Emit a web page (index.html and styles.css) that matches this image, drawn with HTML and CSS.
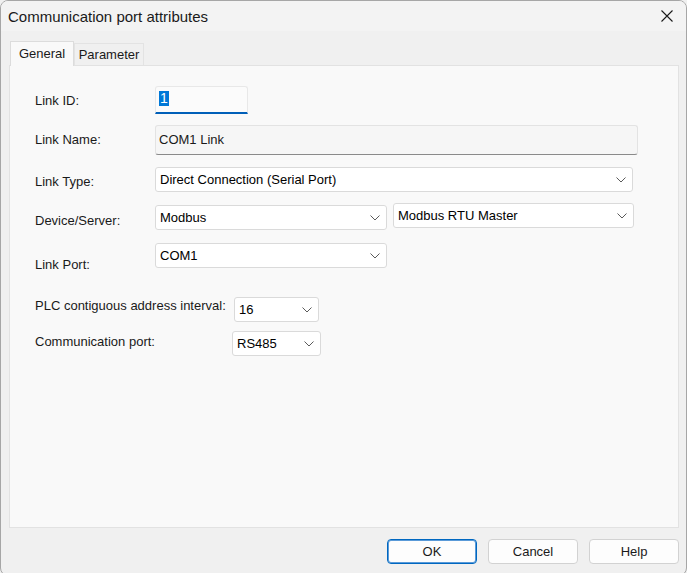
FILE: index.html
```html
<!DOCTYPE html>
<html>
<head>
<meta charset="utf-8">
<link rel="stylesheet" href="styles.css">
</head>
<body>
<div class="window">
  <div class="titlebar">
    <span class="title">Communication port attributes</span>
    <svg class="close" width="12" height="12" viewBox="0 0 12 12"><path d="M0.5 0.5 L11.5 11.5 M11.5 0.5 L0.5 11.5" stroke="#1a1a1a" stroke-width="1.1" fill="none"/></svg>
  </div>
  <div class="content">
    <div class="tabs">
      <div class="tab active">General</div>
      <div class="tab">Parameter</div>
    </div>
    <div class="panel">
      <div class="row r1">
        <label class="lbl">Link ID:</label>
        <div class="input idbox"><span class="sel">1</span></div>
      </div>
      <div class="row r2">
        <label class="lbl">Link Name:</label>
        <div class="input namebox">COM1 Link</div>
      </div>
      <div class="row r3">
        <label class="lbl">Link Type:</label>
        <div class="select wide">Direct Connection (Serial Port)<svg class="chev" width="10" height="6" viewBox="0 0 10 6"><path d="M0.5 0.5 L5 5 L9.5 0.5" stroke="#5a5a5a" stroke-width="1" fill="none"/></svg></div>
      </div>
      <div class="row r4">
        <label class="lbl">Device/Server:</label>
        <div class="select half">Modbus<svg class="chev" width="10" height="6" viewBox="0 0 10 6"><path d="M0.5 0.5 L5 5 L9.5 0.5" stroke="#5a5a5a" stroke-width="1" fill="none"/></svg></div>
        <div class="select half2">Modbus RTU Master<svg class="chev" width="10" height="6" viewBox="0 0 10 6"><path d="M0.5 0.5 L5 5 L9.5 0.5" stroke="#5a5a5a" stroke-width="1" fill="none"/></svg></div>
      </div>
      <div class="row r5">
        <label class="lbl">Link Port:</label>
        <div class="select half">COM1<svg class="chev" width="10" height="6" viewBox="0 0 10 6"><path d="M0.5 0.5 L5 5 L9.5 0.5" stroke="#5a5a5a" stroke-width="1" fill="none"/></svg></div>
      </div>
      <div class="row r6">
        <label class="lbl">PLC contiguous address interval:</label>
        <div class="select small">16<svg class="chev" width="10" height="6" viewBox="0 0 10 6"><path d="M0.5 0.5 L5 5 L9.5 0.5" stroke="#5a5a5a" stroke-width="1" fill="none"/></svg></div>
      </div>
      <div class="row r7">
        <label class="lbl">Communication port:</label>
        <div class="select small2">RS485<svg class="chev" width="10" height="6" viewBox="0 0 10 6"><path d="M0.5 0.5 L5 5 L9.5 0.5" stroke="#5a5a5a" stroke-width="1" fill="none"/></svg></div>
      </div>
    </div>
    <div class="buttons">
      <button class="btn default">OK</button>
      <button class="btn">Cancel</button>
      <button class="btn">Help</button>
    </div>
  </div>
</div>
</body>
</html>
```
FILE: styles.css
```css
* { box-sizing: border-box; }
html, body { margin: 0; padding: 0; background: #f0f0f0; }
body {
  width: 687px;
  height: 573px;
  overflow: hidden;
  font-family: "Liberation Sans", Arial, sans-serif;
  font-size: 13px;
  color: #1a1a1a;
}
.window {
  width: 687px;
  height: 576px;
  border: 1px solid #a6a6a6;
  border-radius: 8px;
  background: #f0f0f0;
  overflow: hidden;
}
.titlebar {
  height: 30px;
  background: #f3f3f3;
  display: flex;
  align-items: center;
  justify-content: space-between;
  padding: 0 13px 0 7px;
}
.title {
  font-size: 15px;
  color: #1a1a1a;
}
.close { display: block; }
.content {
  padding: 10px 7px 0 8px;
}
.tabs {
  display: flex;
  align-items: flex-end;
  height: 24px;
  padding-left: 1px;
  position: relative;
  z-index: 1;
}
.tab {
  height: 22px;
  padding: 0 4px;
  border: 1px solid #e3e3e3;
  border-bottom: none;
  background: #f0f0f0;
  display: flex;
  align-items: center;
  justify-content: center;
  width: 70px;
}
.tab.active {
  height: 25px;
  width: 64px;
  margin-bottom: -1px;
  background: #f9f9f9;
  border-color: #dcdcdc;
  padding-bottom: 2px;
}
.panel {
  height: 463px;
  width: 670px;
  background: #f9f9f9;
  border: 1px solid #e2e2e2;
  padding: 0 0 0 25px;
  display: flex;
  flex-direction: column;
}
.row {
  display: flex;
  align-items: flex-start;
}
.lbl {
  width: 120px;
  line-height: 16px;
  padding-top: 7px;
  flex: none;
}
.r1 { margin-top: 20px; }
.r2 { margin-top: 11px; }
.r3 { margin-top: 12px; }
.r4 { margin-top: 13px; }
.r4 .lbl { padding-top: 8px; }
.r5 { margin-top: 13px; }
.r5 .lbl { padding-top: 14px; }
.r5 { height: 25px; }
.r6 { margin-top: 29px; }
.r6 .lbl { width: 199px; padding-top: 1px; }
.r7 { margin-top: 9px; }
.r7 .lbl { width: 197px; padding-top: 3px; }

.input {
  display: flex;
  align-items: center;
  padding-left: 3px;
}
.idbox {
  width: 93px;
  height: 28px;
  background: #fbfbfb;
  border: 1px solid #e8e8e8;
  border-bottom: 2px solid #005fb8;
  border-radius: 3px 3px 0 0;
  padding-bottom: 2px;
}
.sel {
  background: #0078d7;
  color: #fff;
  padding: 0 1px;
  line-height: 15px;
  font-size: 14px;
}
.namebox {
  width: 483px;
  height: 30px;
  background: #f6f6f6;
  border: 1px solid #e3e3e3;
  border-bottom: 1px solid #8a8a8a;
  border-radius: 3px;
  padding-left: 3px;
  padding-bottom: 2px;
}
.select {
  height: 25px;
  background: #ffffff;
  border: 1px solid #dadada;
  border-radius: 3px;
  display: flex;
  align-items: center;
  justify-content: space-between;
  padding: 0 6px 0 4px;
  color: #000;
}
.chev { flex: none; margin-top: 1px; }
.wide { width: 478px; }
.half { width: 232px; }
.half2 { width: 241px; margin-left: 6px; margin-top: -2px; }
.small { width: 85px; }
.small2 { width: 89px; }

.buttons {
  display: flex;
  justify-content: flex-end;
  gap: 11px;
  margin-top: 11px;
}
.btn {
  width: 90px;
  height: 25px;
  background: #fdfdfd;
  border: 1px solid #d2d2d2;
  border-radius: 4px;
  font-family: "Liberation Sans", Arial, sans-serif;
  font-size: 13px;
  color: #1a1a1a;
  padding: 0;
}
.btn.default {
  border: 1px solid #0067c0;
  box-shadow: inset 0 0 0 1px #5a9ad8;
}
```
